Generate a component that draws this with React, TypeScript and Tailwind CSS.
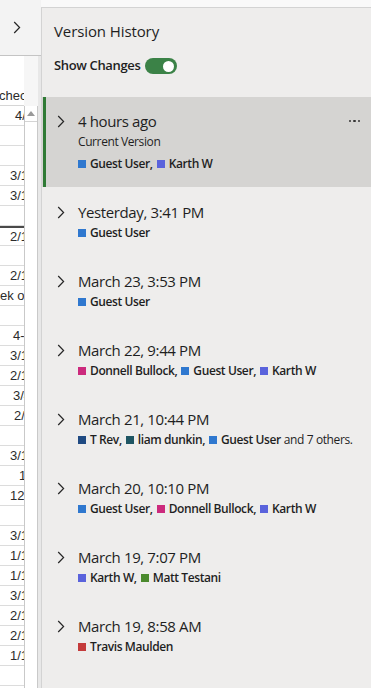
import React from "react";

const FONT = { fontFamily: "'Open Sans', 'Noto Sans', sans-serif" };

const C = {
  guest: "#2f78cf",
  karth: "#5a63dc",
  donnell: "#cc2a7d",
  trev: "#1f4a82",
  liam: "#1e5563",
  matt: "#4b8a2d",
  travis: "#c43b3b",
};

type Author = { name: string; color: string };

const G: Author = { name: "Guest User", color: C.guest };
const K: Author = { name: "Karth W", color: C.karth };
const D: Author = { name: "Donnell Bullock", color: C.donnell };
const T: Author = { name: "T Rev", color: C.trev };
const L: Author = { name: "liam dunkin", color: C.liam };
const M: Author = { name: "Matt Testani", color: C.matt };
const TR: Author = { name: "Travis Maulden", color: C.travis };

const versions: { title: string; current?: boolean; authors: Author[]; extra?: string }[] = [
  { title: "4 hours ago", current: true, authors: [G, K] },
  { title: "Yesterday, 3:41 PM", authors: [G] },
  { title: "March 23, 3:53 PM", authors: [G] },
  { title: "March 22, 9:44 PM", authors: [D, G, K] },
  { title: "March 21, 10:44 PM", authors: [T, L, G], extra: "and 7 others." },
  { title: "March 20, 10:10 PM", authors: [G, D, K] },
  { title: "March 19, 7:07 PM", authors: [K, M] },
  { title: "March 19, 8:58 AM", authors: [TR] },
];

const cells: { t: string; p: string; dark?: boolean }[] = [
  { t: "4/16/2024", p: "pl-[15px]" },
  { t: "", p: "pl-0" },
  { t: "", p: "pl-0" },
  { t: "3/12/2024", p: "pl-[10px]" },
  { t: "3/12/2024", p: "pl-[10px]" },
  { t: "", p: "pl-0" },
  { t: "2/13/2024", p: "pl-[10px]", dark: true },
  { t: "", p: "pl-0" },
  { t: "2/13/2024", p: "pl-[10px]" },
  { t: "ek of", p: "pl-0" },
  { t: "", p: "pl-0" },
  { t: "4-Mar", p: "pl-[13px]" },
  { t: "3/12/2024", p: "pl-[10px]" },
  { t: "2/13/2024", p: "pl-[10px]" },
  { t: "3/4/2024", p: "pl-[13px]" },
  { t: "2/6/2024", p: "pl-[14px]" },
  { t: "", p: "pl-0" },
  { t: "3/12/2024", p: "pl-[10px]" },
  { t: "1", p: "pl-[19px]" },
  { t: "12", p: "pl-[10px]" },
  { t: "", p: "pl-0" },
  { t: "3/12/2024", p: "pl-[10px]" },
  { t: "1/16/2024", p: "pl-[10px]" },
  { t: "1/16/2024", p: "pl-[10px]" },
  { t: "3/12/2024", p: "pl-[10px]" },
  { t: "2/13/2024", p: "pl-[10px]" },
  { t: "2/13/2024", p: "pl-[10px]" },
  { t: "1/16/2024", p: "pl-[10px]" },
  { t: "", p: "pl-0" },
];

function Chevron() {
  return (
    <svg width="8" height="13" viewBox="0 0 8 13">
      <path d="M1.2 1 L6.6 6.5 L1.2 12" fill="none" stroke="#262626" strokeWidth="1.2" />
    </svg>
  );
}

function AuthorLine({ authors, extra }: { authors: Author[]; extra?: string }) {
  return (
    <div className="flex items-center h-[21px] text-[12px] tracking-[-0.4px] text-[#1f1f1f] whitespace-nowrap">
      {authors.map((a, i) => (
        <span key={i} className="flex items-center">
          <span className="inline-block w-[8px] h-[8px] mr-[4px]" style={{ backgroundColor: a.color }} />
          <span className="font-semibold">{a.name}</span>
          {i < authors.length - 1 && <span className="font-semibold mr-[4px]">,</span>}
        </span>
      ))}
      {extra && <span className="ml-[3px]">{extra}</span>}
    </div>
  );
}

export default function App() {
  return (
    <div className="flex w-[371px] h-[688px] overflow-hidden bg-[#f9f9f9]" style={FONT}>
      {/* Left strip: workbook behind panel */}
      <div className="w-[41px] shrink-0 flex flex-col">
        <div className="h-[56px] shrink-0 bg-[#f3f3f3] border-b border-[#c4c4c4] flex items-center pl-[13px]">
          <Chevron />
        </div>
        <div className="flex-1 flex min-h-0">
          <div
            className="w-[24px] shrink-0 bg-white flex flex-col pt-[30px] text-[13px] text-[#2b2b2b]"
            style={{ fontFamily: "'Liberation Sans', Arial, sans-serif" }}
          >
            <div className="h-[20px] shrink-0 border-b border-[#d6d6d6] flex items-center overflow-hidden whitespace-nowrap -ml-[1px]">
              checked
            </div>
            {cells.map((c, i) => (
              <div
                key={i}
                className={`h-[20px] shrink-0 flex items-center overflow-hidden whitespace-nowrap border-b ${c.p} ${
                  c.dark ? "border-t-2 border-t-[#4a4a4a] border-b-[#dcdcdc]" : "border-[#dcdcdc]"
                }`}
              >
                {c.t}
              </div>
            ))}
          </div>
          <div className="w-[14px] shrink-0 flex flex-col bg-[#f6f6f6]">
            <div className="h-[50px] shrink-0" />
            <div className="flex-1 bg-white border-l border-r border-[#c9c9c9] flex flex-col">
              <div className="h-[16px] border-b border-[#d4d4d4] flex items-center justify-center">
                <svg width="8" height="5" viewBox="0 0 8 5">
                  <path d="M0 5 L4 0 L8 5 Z" fill="#9a9a9a" />
                </svg>
              </div>
            </div>
          </div>
          <div className="w-[3px] shrink-0 bg-[#e8e8e8]" />
        </div>
      </div>

      {/* Version history panel */}
      <div className="flex-1 flex flex-col pt-[7px] min-w-0">
        <div className="flex-1 flex flex-col bg-[#eeedec] border-l border-t border-[#d3d3d3] text-[#1f1f1f]">
          <div className="pl-[12px] mt-[13px] h-[20px] flex items-center text-[15px] tracking-[-0.1px]">Version History</div>
          <div className="pl-[12px] mt-[15px] h-[20px] flex items-center gap-[5px]">
            <span className="text-[13px] font-semibold tracking-[-0.35px]">Show Changes</span>
            <span className="w-[32px] h-[16px] rounded-full bg-[#3b8247] flex items-center justify-end pr-[3px]">
              <span className="w-[11px] h-[11px] rounded-full bg-white" />
            </span>
          </div>
          <div className="mt-[21px] flex flex-col">
            {versions.map((v, i) => (
              <div key={i} className={`flex ${v.current ? "bg-[#d5d4d2]" : ""}`}>
                <div className="w-[1px] shrink-0" />
                <div className={`w-[3px] shrink-0 ${v.current ? "bg-[#2f7a35]" : ""}`} />
                <div className={`flex-1 flex pb-[13px] pl-[11px] ${v.current ? "pt-[14px]" : "pt-[15px]"}`}>
                  <div className="h-[20px] flex items-center">
                    <Chevron />
                  </div>
                  <div className="ml-[13px] flex-1 flex flex-col min-w-0">
                    <div className="h-[20px] flex items-center justify-between">
                      <span className="text-[15px] tracking-[-0.38px]">{v.title}</span>
                      {v.current && (
                        <span className="flex gap-[2px] mr-[11px]">
                          <span className="w-[2.5px] h-[2.5px] rounded-full bg-[#333]" />
                          <span className="w-[2.5px] h-[2.5px] rounded-full bg-[#333]" />
                          <span className="w-[2.5px] h-[2.5px] rounded-full bg-[#333]" />
                        </span>
                      )}
                    </div>
                    {v.current && (
                      <div className="h-[22px] flex items-center text-[12px] tracking-[-0.4px]">Current Version</div>
                    )}
                    <AuthorLine authors={v.authors} extra={v.extra} />
                  </div>
                </div>
              </div>
            ))}
          </div>
        </div>
      </div>
    </div>
  );
}
